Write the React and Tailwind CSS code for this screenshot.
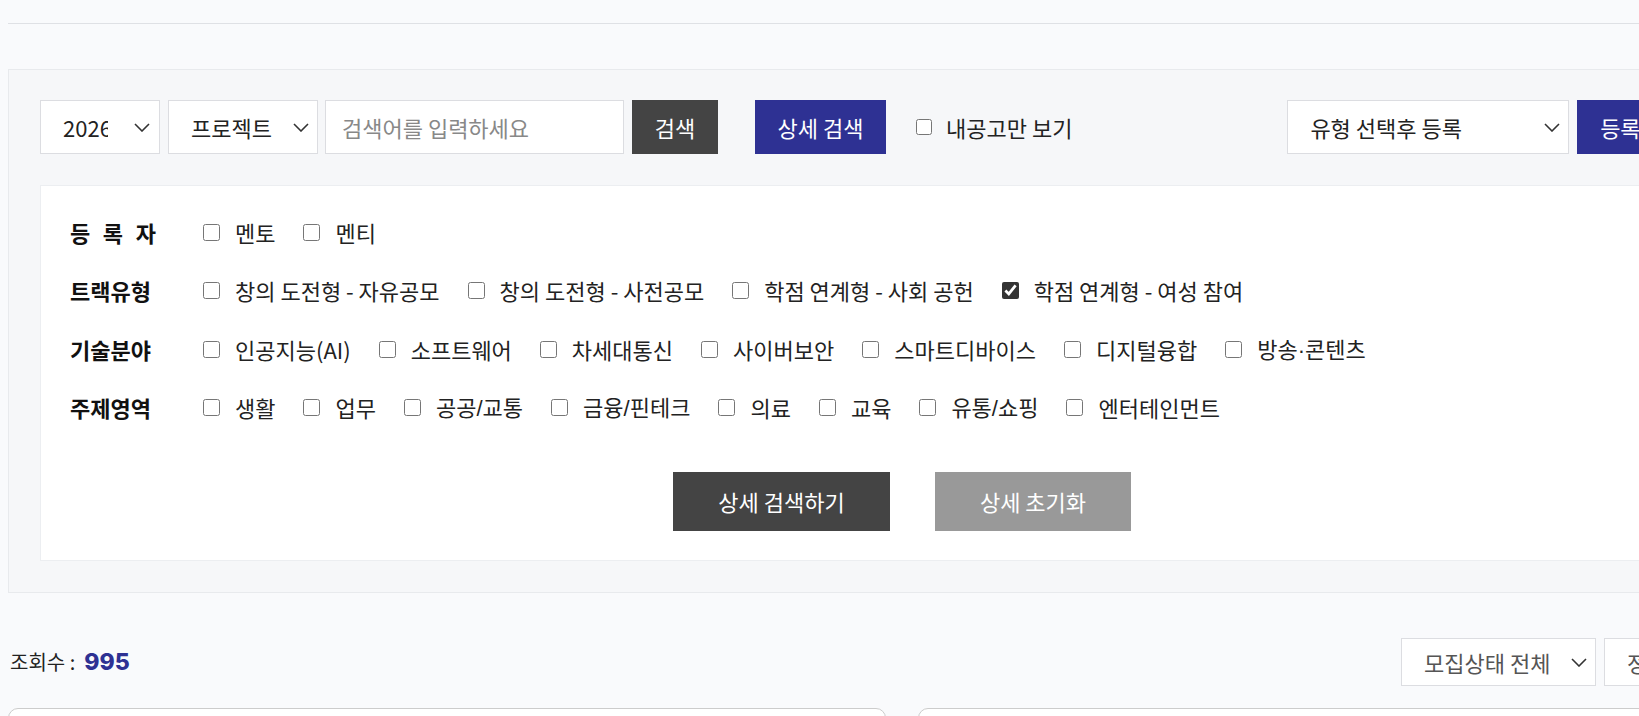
import React from 'react';

const registrants = ['멘토', '멘티'];
const tracks = ['창의 도전형 - 자유공모', '창의 도전형 - 사전공모', '학점 연계형 - 사회 공헌', '학점 연계형 - 여성 참여'];
const techFields = ['인공지능(AI)', '소프트웨어', '차세대통신', '사이버보안', '스마트디바이스', '디지털융합', '방송·콘텐츠'];
const topics = ['생활', '업무', '공공/교통', '금융/핀테크', '의료', '교육', '유통/쇼핑', '엔터테인먼트'];

function Chevron() {
  return (
    <svg width="16" height="9" viewBox="0 0 16 9" fill="none" className="shrink-0">
      <polyline points="1,1 8,8 15,1" stroke="#333" strokeWidth="1.6" />
    </svg>
  );
}

function SelectBox({ label, className, textClass = '' }) {
  return (
    <div className={`flex items-center justify-between border border-[#dcdde1] bg-white pl-[22px] pr-[8px] ${className}`}>
      <span className={`whitespace-nowrap ${textClass}`}>{label}</span>
      <Chevron />
    </div>
  );
}

// the CJK font draws "/" and "·" wide, the original has narrow ones
function renderLabel(text) {
  const m = text.match(/^(.*?)([/·])(.*)$/);
  if (!m) return text;
  return (
    <>
      {m[1]}
      <span className="font-['Liberation_Sans',sans-serif]">{m[2]}</span>
      {m[3]}
    </>
  );
}

function Check({ label, checked }) {
  return (
    <label className="mr-[28px] flex items-center">
      <input type="checkbox" defaultChecked={checked} className="h-[17px] w-[17px] accent-[#333]" />
      <span className="ml-[15px]">{renderLabel(label)}</span>
    </label>
  );
}

function FilterRow({ title, items, checkedIdx = -1 }) {
  return (
    <div className="flex h-[58.5px] items-center">
      <span className="w-[86px] font-bold text-[#111] [text-align-last:justify]">{title}</span>
      <div className="ml-[47px] flex items-center">
        {items.map((it, i) => (
          <Check key={it} label={it} checked={i === checkedIdx} />
        ))}
      </div>
    </div>
  );
}

export default function App() {
  return (
    <div className="min-h-screen w-full overflow-hidden bg-[#f9fafc] font-['Noto_Sans_CJK_KR',sans-serif] text-[22px] text-[#222]">
      <div className="w-[1804px] px-2">
        <div className="h-[24px] border-b border-[#dfe1e5]" />

        <section className="mt-[45px] border border-[#e8eaed] bg-[#f6f7f9] px-[31px] pb-[31px] pt-[30px]">
          <div className="flex h-[54px] items-stretch">
            <div className="flex w-[120px] items-center border border-[#dcdde1] bg-white pl-[22px] pr-[9px]">
              <span className="w-[45px] overflow-hidden whitespace-nowrap">2026</span>
              <span className="ml-auto"><Chevron /></span>
            </div>
            <SelectBox label="프로젝트" className="ml-[8px] w-[150px]" />
            <input
              className="ml-[7px] w-[299px] border border-[#dcdde1] bg-white px-[16px] outline-none placeholder:text-[#888]"
              placeholder="검색어를 입력하세요"
            />
            <button className="ml-[8px] w-[86px] bg-[#444] text-white">검색</button>
            <button className="ml-[37px] w-[131px] bg-[#2e3193] text-white">상세 검색</button>
            <label className="ml-[30px] flex items-center">
              <input type="checkbox" className="h-[16px] w-[16px] accent-[#333]" />
              <span className="ml-[14px]">내공고만 보기</span>
            </label>
            <SelectBox label="유형 선택후 등록" className="ml-[215px] w-[282px]" />
            <button className="ml-[8px] w-[86px] bg-[#2e3193] text-white">등록</button>
          </div>

          <div className="mt-[31px] border border-[#eceef1] bg-white pb-[29px] pl-[29px] pt-[17px]">
            <FilterRow title="등 록 자" items={registrants} />
            <FilterRow title="트랙유형" items={tracks} checkedIdx={3} />
            <FilterRow title="기술분야" items={techFields} />
            <FilterRow title="주제영역" items={topics} />
            <div className="mt-[35px] flex justify-center gap-[45px] pr-[29px]">
              <button className="h-[59px] w-[217px] bg-[#444] text-white">상세 검색하기</button>
              <button className="h-[59px] w-[196px] bg-[#999] text-white">상세 초기화</button>
            </div>
          </div>
        </section>

        <div className="mt-[45px] flex h-[48px] items-center justify-between">
          <p className="flex items-center pl-[2px] text-[20px]">
            <span>조회수 :</span>
            <span className="ml-[9px] font-['Inter',sans-serif] text-[23px] font-extrabold text-[#2e3193]">995</span>
          </p>
          <div className="flex h-full gap-[8px]">
            <SelectBox label="모집상태 전체" className="w-[195px] text-[#555]" />
            <SelectBox label="정렬 순서" className="w-[192px] text-[#555]" />
          </div>
        </div>

        <div className="mt-[22px] grid grid-cols-2 gap-[32px]">
          <div className="h-[240px] rounded-[10px] border border-[#cccccc] bg-white" />
          <div className="h-[240px] rounded-[10px] border border-[#cccccc] bg-white" />
        </div>
      </div>
    </div>
  );
}
